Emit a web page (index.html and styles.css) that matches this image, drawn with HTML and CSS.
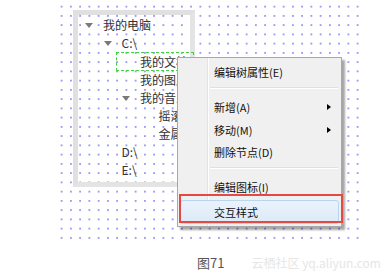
FILE: index.html
```html
<!DOCTYPE html>
<html lang="zh-CN">
<head>
    <meta charset="UTF-8">
    <meta name="viewport" content="width=device-width, initial-scale=1.0">
    <title>图71</title>
    <link rel="stylesheet" href="styles.css">
</head>
<body>
    <div class="canvas">
        <div class="tree">
            <div class="row lv0"><span class="toggle"></span><span class="label">我的电脑</span></div>
            <div class="row lv1"><span class="toggle"></span><span class="label">C:\</span></div>
            <div class="row lv2 focus"><span class="leaf"></span><span class="label">我的文档</span></div>
            <div class="row lv2"><span class="leaf"></span><span class="label">我的图片</span></div>
            <div class="row lv2"><span class="toggle"></span><span class="label">我的音乐</span></div>
            <div class="row lv3"><span class="leaf"></span><span class="label">摇滚</span></div>
            <div class="row lv3"><span class="leaf"></span><span class="label">金属</span></div>
            <div class="row lv1"><span class="leaf"></span><span class="label">D:\</span></div>
            <div class="row lv1"><span class="leaf"></span><span class="label">E:\</span></div>
        </div>

        <div class="menu">
            <div class="item">编辑树属性(E)</div>
            <div class="sep"></div>
            <div class="item sub">新增(A)</div>
            <div class="item sub">移动(M)</div>
            <div class="item">删除节点(D)</div>
            <div class="sep"></div>
            <div class="item">编辑图标(I)</div>
            <div class="item hover">交互样式</div>
        </div>
        <div class="mark"></div>
    </div>

    <div class="caption">
        <span class="title">图71</span>
        <span class="watermark">云栖社区 yq.aliyun.com</span>
    </div>
</body>
</html>
```

FILE: styles.css
```css
body {
    margin: 0;
    font-family: "Noto Sans CJK SC", sans-serif;
    background: #fff;
}
.canvas {
    position: relative;
    margin: 2px 0 0 57px;
    width: 305px;
    height: 240px;
    padding: 8px 0 0 16px;
    box-sizing: border-box;
    background-image: radial-gradient(circle, #9a9af4 0.7px, transparent 1.1px);
    background-size: 9.25px 9.25px;
}
.tree {
    width: 122px;
    height: 177px;
    border: 5px solid #e4e4e4;
    border-top-color: #e0e0e0;
    border-left-color: #e0e0e0;
    box-sizing: border-box;
    padding-top: 1px;
}
.row {
    display: flex;
    align-items: center;
    height: 18px;
    font-size: 12px;
    color: #333;
    white-space: nowrap;
}
.lv0 { padding-left: 7px; }
.lv1 { padding-left: 25.5px; }
.lv2 { padding-left: 44px; }
.lv3 { padding-left: 62.5px; }
.toggle, .leaf {
    width: 8px;
    margin-right: 10px;
    flex: none;
}
.toggle {
    height: 0;
    border-left: 4px solid transparent;
    border-right: 4px solid transparent;
    border-top: 5px solid #7a7a7a;
    box-sizing: border-box;
}
.label {
    line-height: 18px;
}
.focus {
    margin-left: 38px;
    padding-left: 6px;
    width: 72px;
    height: 19px;
    outline: 1px dashed #3fd43f;
    outline-offset: -1px;
}
.menu {
    position: absolute;
    left: 120px;
    top: 55px;
    width: 165px;
    padding: 3px 0 2px;
    background: #f0f0f0;
    border: 1px solid #a8a8a8;
    box-sizing: border-box;
    box-shadow: 3px 3px 2px rgba(0, 0, 0, 0.35);
    background-image: linear-gradient(to right, transparent 29px, #e2e3e3 29px, #e2e3e3 30px, #fff 30px, #fff 31px, transparent 31px);
}
.item {
    position: relative;
    height: 22.5px;
    line-height: 22.5px;
    padding-left: 36px;
    font-size: 11px;
    color: #111;
}
.sub::after {
    content: "";
    position: absolute;
    left: 149px;
    top: 8px;
    border-top: 3.5px solid transparent;
    border-bottom: 3.5px solid transparent;
    border-left: 4px solid #000;
}
.sep {
    height: 1px;
    margin: 3.5px 3px 7px 32px;
    background: #e0e0e0;
    border-bottom: 1px solid #fff;
}
.hover {
    margin: 1px 2px 0;
    padding-left: 33px;
    height: 22.5px;
    line-height: 22.5px;
    border: 1px solid #b8d6f0;
    border-radius: 3px;
    background: linear-gradient(#eaf3fc, #dceaf7);
}
.mark {
    position: absolute;
    left: 122px;
    top: 192px;
    width: 164px;
    height: 29px;
    border: 2px solid #e24a46;
    box-sizing: border-box;
}
.caption {
    display: flex;
    align-items: center;
    height: 20px;
    margin-top: 10px;
    padding-left: 197px;
}
.title {
    font-size: 13px;
    color: #555;
}
.watermark {
    margin-left: 27px;
    font-size: 12px;
    color: #e6e6e6;
    white-space: nowrap;
}
```
